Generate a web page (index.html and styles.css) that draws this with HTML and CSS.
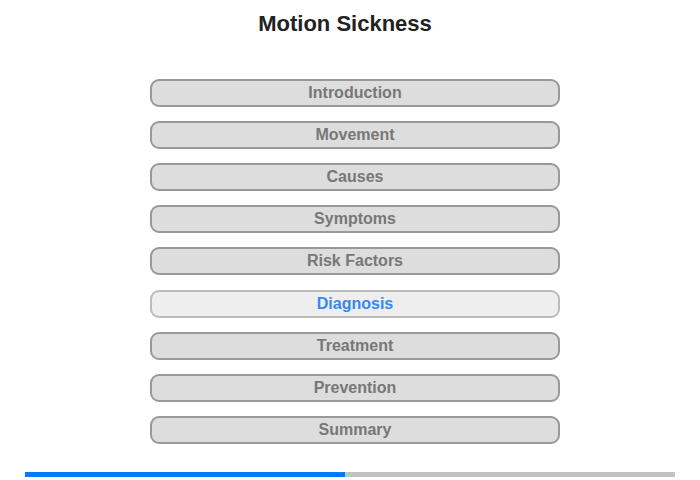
FILE: index.html
```html
<!DOCTYPE html>
<html>
<head>
<meta charset="utf-8">
<link rel="stylesheet" href="styles.css">
</head>
<body>
<div class="page">
  <h1 class="title">Motion Sickness</h1>
  <nav class="menu">
    <div class="item">Introduction</div>
    <div class="item">Movement</div>
    <div class="item">Causes</div>
    <div class="item">Symptoms</div>
    <div class="item">Risk Factors</div>
    <div class="item active">Diagnosis</div>
    <div class="item">Treatment</div>
    <div class="item">Prevention</div>
    <div class="item">Summary</div>
  </nav>
  <div class="progress"><div class="fill" style="width:49.23%"></div></div>
</div>
</body>
</html>
```
FILE: styles.css
```css
html, body {
  margin: 0;
  padding: 0;
  background: #fff;
  font-family: "Liberation Sans", Arial, sans-serif;
}
.page {
  width: 700px;
  height: 480px;
  display: flex;
  flex-direction: column;
}
.title {
  margin: 0;
  padding: 11px 10px 0 0;
  font-size: 22px;
  line-height: 25px;
  font-weight: bold;
  color: #222;
  text-align: center;
}
.menu {
  margin: 43px 0 0 150px;
  width: 410px;
  display: flex;
  flex-direction: column;
  gap: 14.109375px;
}
.item {
  box-sizing: border-box;
  height: 28px;
  border: 2px solid #999;
  border-radius: 9px;
  background: #ddd;
  color: #777;
  font-size: 16px;
  font-weight: bold;
  line-height: 24px;
  text-align: center;
}
.item.active {
  background: #eee;
  border-color: #bbb;
  color: #3388f5;
}
.progress {
  margin: 28px 0 0 25px;
  width: 650px;
  height: 5px;
  background: #c2c2c2;
  display: flex;
}
.fill {
  height: 100%;
  background: #007bff;
}
```
